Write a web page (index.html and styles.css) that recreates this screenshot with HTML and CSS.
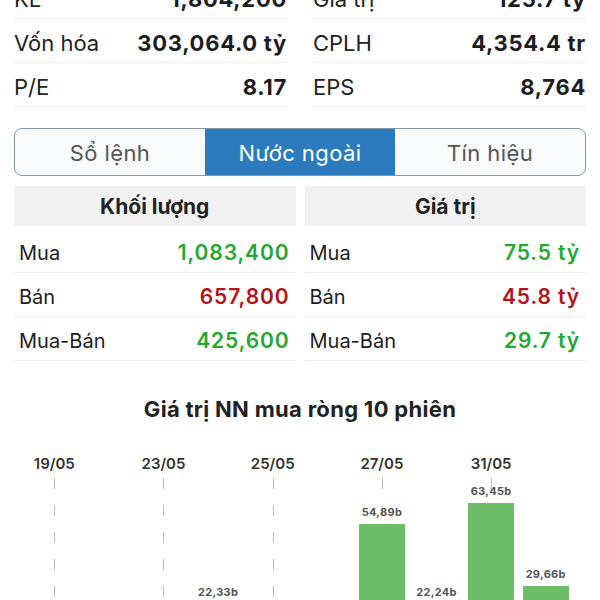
FILE: index.html
```html
<!DOCTYPE html>
<html lang="vi">
<head>
    <meta charset="UTF-8">
    <meta name="viewport" content="width=device-width, initial-scale=1.0">
    <title>Nước ngoài</title>
    <link rel="stylesheet" href="styles.css">
</head>
<body>
    <div class="page">
        <!-- Stock summary -->
        <div class="stats">
            <div class="stat-col">
                <div class="stat-row"><span>KL</span><b>1,804,200</b></div>
                <div class="stat-row"><span>Vốn hóa</span><b>303,064.0 tỷ</b></div>
                <div class="stat-row"><span>P/E</span><b>8.17</b></div>
            </div>
            <div class="stat-col">
                <div class="stat-row"><span>Giá trị</span><b>125.7 tỷ</b></div>
                <div class="stat-row"><span>CPLH</span><b>4,354.4 tr</b></div>
                <div class="stat-row"><span>EPS</span><b>8,764</b></div>
            </div>
        </div>

        <!-- Tabs -->
        <div class="tabs">
            <a href="#">Sổ lệnh</a>
            <a href="#" class="active">Nước ngoài</a>
            <a href="#">Tín hiệu</a>
        </div>

        <!-- Foreign trading table -->
        <div class="foreign">
            <div class="foreign-col">
                <div class="foreign-head">Khối lượng</div>
                <div class="foreign-row"><span>Mua</span><b class="up">1,083,400</b></div>
                <div class="foreign-row"><span>Bán</span><b class="down">657,800</b></div>
                <div class="foreign-row"><span>Mua-Bán</span><b class="up">425,600</b></div>
            </div>
            <div class="foreign-col">
                <div class="foreign-head">Giá trị</div>
                <div class="foreign-row"><span>Mua</span><b class="up">75.5 tỷ</b></div>
                <div class="foreign-row"><span>Bán</span><b class="down">45.8 tỷ</b></div>
                <div class="foreign-row"><span>Mua-Bán</span><b class="up">29.7 tỷ</b></div>
            </div>
        </div>

        <!-- Net buy chart -->
        <h3 class="chart-title">Giá trị NN mua ròng 10 phiên</h3>
        <div class="chart">
            <div class="chart-dates">
                <span>19/05</span><span></span>
                <span>23/05</span><span></span>
                <span>25/05</span><span></span>
                <span>27/05</span><span></span>
                <span>31/05</span><span></span>
            </div>
            <div class="chart-plot">
                <div class="slot grid"></div>
                <div class="slot"></div>
                <div class="slot grid"></div>
                <div class="slot"><em>22,33b</em><i class="bar" style="height: 55px"></i></div>
                <div class="slot grid"></div>
                <div class="slot"></div>
                <div class="slot grid"><em>54,89b</em><i class="bar" style="height: 135px"></i></div>
                <div class="slot"><em>22,24b</em><i class="bar" style="height: 55px"></i></div>
                <div class="slot grid"><em>63,45b</em><i class="bar" style="height: 156px"></i></div>
                <div class="slot"><em>29,66b</em><i class="bar" style="height: 73px"></i></div>
            </div>
        </div>
    </div>
</body>
</html>
```
FILE: styles.css
```css
* {
    margin: 0;
    padding: 0;
    box-sizing: border-box;
}

body {
    background: #fff;
    font-family: Inter, 'Noto Sans', sans-serif;
    color: #1d1d1f;
    overflow: hidden;
    height: 600px;
}

.page {
    margin-top: -25px;
    padding: 0 14px;
}

/* Summary rows */
.stats {
    display: grid;
    grid-template-columns: 1fr 1fr;
    column-gap: 26px;
}

.stat-row {
    display: flex;
    justify-content: space-between;
    align-items: center;
    height: 44px;
    padding-top: 4px;
    border-bottom: 1px solid #ededed;
    font-size: 22px;
}

.stat-row span {
    color: #222;
}

.stat-row b {
    font-weight: 700;
    letter-spacing: 0.7px;
}

/* Tabs */
.tabs {
    display: flex;
    margin-top: 21px;
    height: 48px;
    border: 1.5px solid #7f98ac;
    border-radius: 8px;
    overflow: hidden;
    background: #f8fafc;
}

.tabs a {
    flex: 1;
    display: flex;
    justify-content: center;
    align-items: center;
    padding-top: 2px;
    text-decoration: none;
    color: #555;
    font-size: 22px;
    letter-spacing: 0.4px;
}

.tabs a.active {
    background: #2b7bbd;
    color: #fff;
}

/* Foreign table */
.foreign {
    display: grid;
    grid-template-columns: 1fr 1fr;
    column-gap: 9px;
    margin-top: 10px;
}

.foreign-head {
    height: 40px;
    display: flex;
    justify-content: center;
    align-items: center;
    background: #f2f2f2;
    font-size: 21px;
    font-weight: 700;
    color: #222;
    margin-bottom: 3px;
}

.foreign-row {
    display: flex;
    justify-content: space-between;
    align-items: center;
    height: 44px;
    padding: 4px 6px 0 5px;
    border-bottom: 1px solid #efefef;
    font-size: 20px;
}

.foreign-row:first-of-type {
    height: 47px;
}

.foreign-row b {
    font-size: 21px;
    font-weight: 600;
    letter-spacing: 0.9px;
}

.up { color: #25a833; }
.down { color: #b3151d; }

/* Chart */
.chart-title {
    margin-top: 35px;
    text-align: center;
    font-size: 22px;
    font-weight: 700;
    letter-spacing: 0.3px;
    color: #222;
}

.chart {
    padding: 0 13px;
    margin-top: 32px;
}

.chart-dates {
    display: grid;
    grid-template-columns: repeat(10, 1fr);
    height: 18px;
    font-size: 15px;
    font-weight: 600;
    color: #333;
}

.chart-dates span {
    text-align: center;
}

.chart-plot {
    display: grid;
    grid-template-columns: repeat(10, 1fr);
    height: 181px;
    margin-top: 6px;
}

.slot {
    position: relative;
    display: flex;
    flex-direction: column;
    justify-content: flex-end;
    align-items: center;
}

.slot.grid::before {
    content: '';
    position: absolute;
    top: 0;
    bottom: 0;
    left: 50%;
    width: 1px;
    background: repeating-linear-gradient(to bottom, #bdbdbd 0 11px, transparent 11px 27px);
}

.slot em {
    position: relative;
    font-style: normal;
    font-size: 11px;
    font-weight: 700;
    color: #555;
    letter-spacing: 0.3px;
    margin-bottom: 5px;
}

.bar {
    position: relative;
    display: block;
    width: 46px;
    background: #6dbd66;
}
```
